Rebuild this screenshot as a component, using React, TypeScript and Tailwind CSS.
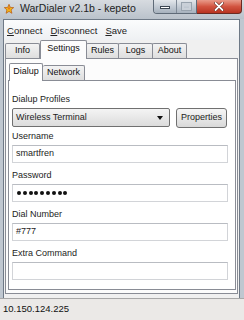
import React from 'react';

const font = "font-['Liberation_Sans',Arial,sans-serif]";

function Star() {
  return (
    <svg width="10" height="10" viewBox="0 0 10 10" className="mt-[4px] ml-[4px] shrink-0">
      <polygon
        points="5,0.3 6.3,3.4 9.7,3.6 7.1,5.8 7.9,9.3 5,7.4 2.1,9.3 2.9,5.8 0.3,3.6 3.7,3.4"
        fill="#f2b619"
        stroke="#b8560e"
        strokeWidth="0.7"
      />
      <polygon points="5,2.2 5.8,4.2 5,6.2 4.2,4.2" fill="#e24a1c" opacity="0.7" />
    </svg>
  );
}

function WindowButtons() {
  return (
    <div className="flex h-[14px] mr-[2px]">
      <div className="flex rounded-bl-[4px] border border-t-0 border-[#5f6b78] overflow-hidden">
        <div className="w-[23px] h-full bg-gradient-to-b from-[#e3e7eb] via-[#c3cbd4] to-[#a6b1bd] border-r border-[#7e8996] flex items-center justify-center">
          <div className="w-[10px] h-[3px] mt-[2px] bg-white border border-[#3b4652]" />
        </div>
        <div className="w-[19px] h-full bg-gradient-to-b from-[#e3e7eb] via-[#c3cbd4] to-[#a6b1bd] flex items-center justify-center">
          <div className="w-[9px] h-[7px] border-[2px] border-t-[3px] border-[#c9d0d8] outline outline-1 outline-[#98a3ae]" />
        </div>
      </div>
      <div className="w-[45px] h-full rounded-br-[4px] border border-t-0 border-l-0 border-[#6a2a22] bg-gradient-to-b from-[#e89a8a] via-[#d25441] to-[#b83220] flex items-center justify-center">
        <svg width="10" height="9" viewBox="0 0 10 9">
          <path d="M1.5 1 L8.5 8 M8.5 1 L1.5 8" stroke="#5a1a12" strokeWidth="3" strokeLinecap="round" />
          <path d="M1.5 1 L8.5 8 M8.5 1 L1.5 8" stroke="#ffffff" strokeWidth="1.8" strokeLinecap="round" />
        </svg>
      </div>
    </div>
  );
}

function Field({ label, children, className = '' }: { label: string; children?: React.ReactNode; className?: string }) {
  return (
    <div className={className}>
      <div className="h-[14px] leading-[14px] text-[9px] text-[#1c1c1c]">{label}</div>
      <div className="mt-[2px] h-[18px] bg-white border border-[#d2d4d8] border-t-[#b9bcc2] flex items-center pl-[3px] text-[9px] text-[#1c1c1c]">
        {children}
      </div>
    </div>
  );
}

export default function App() {
  const tabs = ['Info', 'Settings', 'Rules', 'Logs', 'About'];
  const widths = ['w-[35px]', 'w-[47px]', 'w-[33px]', 'w-[35px]', 'w-[35px]'];

  return (
    <div className={`w-[244px] h-[320px] overflow-hidden flex flex-col bg-[#bfc7d0] ${font}`}>
      {/* title bar */}
      <div className="h-[19px] shrink-0 flex items-start bg-gradient-to-b from-[#d7dbe0] to-[#bac2cb]">
        <Star />
        <span className="ml-[6px] mt-[2px] text-[10.5px] leading-[13px] text-[#222] whitespace-nowrap">WarDialer v2.1b - kepeto</span>
        <div className="ml-auto">
          <WindowButtons />
        </div>
      </div>

      {/* client area */}
      <div className="flex-1 ml-[3px] mr-[4px] border border-b-0 border-[#6e7986] bg-[#f0f0f0] flex flex-col min-h-0">
        {/* menu */}
        <div className="h-[20px] shrink-0 flex items-center gap-[8px] pl-[3px] pt-[2px] text-[9.5px] text-[#222] bg-gradient-to-b from-[#fbfcfd] to-[#eef0f3]">
          <span><span className="underline">C</span>onnect</span>
          <span><span className="underline">D</span>isconnect</span>
          <span><span className="underline">S</span>ave</span>
        </div>

        {/* main tabs */}
        <div className="h-[18px] shrink-0 flex items-end pl-[1px] text-[9px]">
          {tabs.map((t, i) =>
            t === 'Settings' ? (
              <div
                key={t}
                className={`${widths[i]} h-[19px] -mb-px relative z-10 bg-[#fcfcfc] border border-b-0 border-[#898c95] rounded-t-[2px] flex items-center justify-center text-[#111] pb-[2px]`}
              >
                {t}
              </div>
            ) : (
              <div
                key={t}
                className={`${widths[i]} h-[15px] bg-gradient-to-b from-[#f3f3f3] to-[#dedede] border border-b-0 border-[#898c95] -ml-px first:ml-0 rounded-t-[2px] flex items-center justify-center text-[#111]`}
              >
                {t}
              </div>
            )
          )}
        </div>

        {/* settings page */}
        <div className="flex-1 mx-[1px] mb-[4px] border border-[#898c95] bg-[#fcfcfc] flex flex-col pl-[2px] pr-[1px] pb-[3px] min-h-0">
          {/* sub tabs */}
          <div className="h-[21px] shrink-0 flex items-end pl-[1px] text-[9px]">
            <div className="w-[34px] h-[18px] -mb-px relative z-10 bg-white border border-b-0 border-[#898c95] rounded-t-[2px] flex items-center justify-center text-[#111] pb-[1px]">
              Dialup
            </div>
            <div className="w-[42px] h-[15px] bg-gradient-to-b from-[#f3f3f3] to-[#dedede] border border-b-0 border-l-0 border-[#898c95] rounded-t-[2px] flex items-center justify-center text-[#111]">
              Network
            </div>
          </div>

          {/* dialup panel */}
          <div className="flex-1 border border-[#898c95] bg-white pl-[3px] pr-[7px] pt-[11px] flex flex-col">
            <div className="h-[14px] leading-[14px] text-[9px] text-[#1c1c1c]">Dialup Profiles</div>
            <div className="mt-[2px] flex items-center h-[19px]">
              <div className="w-[158px] h-[19px] rounded-[2px] border border-[#707070] bg-gradient-to-b from-[#f4f4f4] to-[#dcdcdc] flex items-center pl-[3px] pr-[6px] text-[9px] text-[#1c1c1c]">
                <span className="flex-1">Wireless Terminal</span>
                <svg width="6" height="4" viewBox="0 0 6 4">
                  <path d="M0 0 H6 L3 4 Z" fill="#111" />
                </svg>
              </div>
              <div className="ml-[6px] w-[51px] h-[20px] rounded-[3px] border border-[#707070] bg-gradient-to-b from-[#f6f6f6] to-[#d9d9d9] flex items-center justify-center text-[9px] text-[#1c1c1c]">
                Properties
              </div>
            </div>

            <Field label="Username" className="mt-[2px]">smartfren</Field>
            <Field label="Password" className="mt-[5px]">
              <div className="flex gap-[1.8px] pl-[1px]">
                {Array.from({ length: 9 }).map((_, i) => (
                  <div key={i} className="w-[4px] h-[4px] rounded-full bg-[#111]" />
                ))}
              </div>
            </Field>
            <Field label="Dial Number" className="mt-[5px]">#777</Field>
            <Field label="Extra Command" className="mt-[5px]" />
          </div>
        </div>
      </div>

      {/* status bar */}
      <div className="h-[22px] shrink-0 bg-[#ebe9e7] border-t border-[#a8a8a8] flex items-center pl-[3px] text-[9.5px] text-[#111]">
        10.150.124.225
      </div>
    </div>
  );
}
